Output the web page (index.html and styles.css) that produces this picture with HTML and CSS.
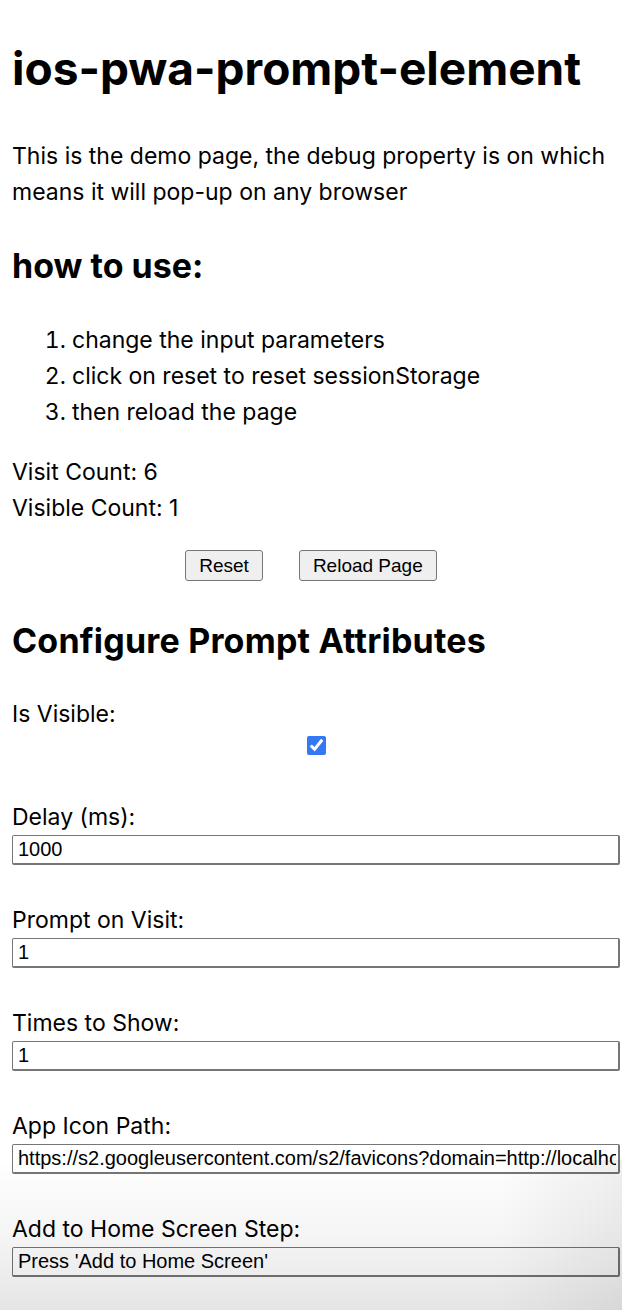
FILE: index.html
```html
<!DOCTYPE html>
<html lang="en">
<head>
<meta charset="utf-8">
<title>ios-pwa-prompt-element</title>
<link rel="stylesheet" href="styles.css">
</head>
<body>
<main class="page">
  <h1 class="title">ios-pwa-prompt-element</h1>
  <p class="intro">This is the demo page, the debug property is on which means it will pop-up on any browser</p>
  <h2 class="section">how to use:</h2>
  <ol class="steps">
    <li>change the input parameters</li>
    <li>click on reset to reset sessionStorage</li>
    <li>then reload the page</li>
  </ol>
  <div class="counts">
    <div>Visit Count: 6</div>
    <div>Visible Count: 1</div>
  </div>
  <div class="actions">
    <button class="btn" type="button">Reset</button>
    <button class="btn" type="button">Reload Page</button>
  </div>
  <h2 class="section section-config">Configure Prompt Attributes</h2>
  <form class="config">
    <div class="field">
      <label class="label" for="visible">Is Visible:</label>
      <div class="check-row"><input class="check" id="visible" type="checkbox" checked></div>
    </div>
    <div class="field">
      <label class="label" for="delay">Delay (ms):</label>
      <input class="text" id="delay" type="text" value="1000">
    </div>
    <div class="field">
      <label class="label" for="visit">Prompt on Visit:</label>
      <input class="text" id="visit" type="text" value="1">
    </div>
    <div class="field">
      <label class="label" for="times">Times to Show:</label>
      <input class="text" id="times" type="text" value="1">
    </div>
    <div class="field">
      <label class="label" for="icon">App Icon Path:</label>
      <input class="text" id="icon" type="text" value="https://s2.googleusercontent.com/s2/favicons?domain=http://localhost:8080">
    </div>
    <div class="field">
      <label class="label" for="step">Add to Home Screen Step:</label>
      <input class="text" id="step" type="text" value="Press 'Add to Home Screen'">
    </div>
  </form>
</main>
<div class="backdrop"></div>
</body>
</html>
```

FILE: styles.css
```css
html, body {
  margin: 0;
  padding: 0;
  background: #ffffff;
}
body {
  font-family: Inter, "Noto Sans", sans-serif;
  font-size: 23px;
  line-height: 36px;
  color: #000;
}
.page {
  padding: 0 12px;
}
.title {
  margin: 41px 0 0;
  font-size: 46px;
  line-height: 55px;
  font-weight: 700;
}
.intro {
  margin: 42px 0 0;
}
.section {
  margin: 36px 0 0;
  font-size: 34px;
  line-height: 40px;
  font-weight: 700;
}
.section-config {
  margin-top: 40px;
  letter-spacing: 0.2px;
}
.steps {
  margin: 36px 0 0;
  padding-left: 60px;
}
.counts {
  margin-top: 24px;
}
.actions {
  margin-top: 24px;
  display: flex;
  justify-content: center;
  gap: 36px;
}
.btn {
  font-family: "Liberation Sans", Arial, sans-serif;
  font-size: 19px;
  line-height: 23px;
  padding: 3px 13px;
  border: 1px solid #767676;
  border-radius: 3px;
  background: #efefef;
  color: #000;
}
.config {
  margin-top: 35px;
}
.field {
  margin-bottom: 37px;
}
.label {
  display: block;
}
.check-row {
  display: flex;
  justify-content: center;
  padding-left: 11px;
  height: 26px;
  align-items: flex-start;
  padding-top: 4px;
  margin-bottom: 5px;
}
.check {
  width: 19px;
  height: 19px;
  margin: 0;
  accent-color: #3478f6;
}
.text {
  display: block;
  width: 100%;
  box-sizing: content-box;
  height: 25px;
  padding: 1px 2px 1px 5px;
  margin: 0;
  border: 1px solid #767676;
  border-right-width: 2px;
  border-bottom-width: 2px;
  border-radius: 2px;
  font-family: "Liberation Sans", Arial, sans-serif;
  font-size: 20px;
  color: #000;
  background: transparent;
}
.backdrop {
  position: fixed;
  left: 0;
  right: 0;
  bottom: 0;
  height: 150px;
  pointer-events: none;
  background:
    linear-gradient(to right, rgba(0,0,0,0) 80%, rgba(0,0,0,0.06) 100%),
    linear-gradient(to bottom, rgba(0,0,0,0) 0%, rgba(0,0,0,0.04) 50%, rgba(0,0,0,0.1) 100%);
}
```
